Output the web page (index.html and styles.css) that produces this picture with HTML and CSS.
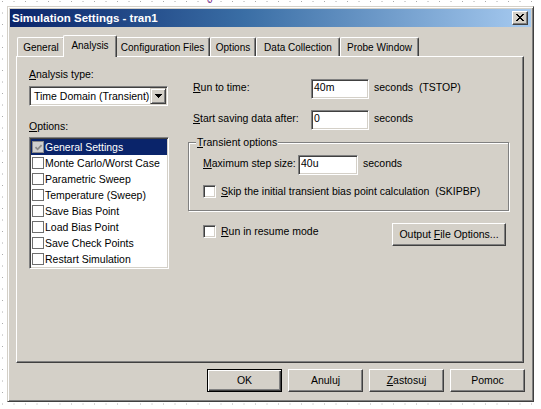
FILE: index.html
```html
<!DOCTYPE html>
<html>
<head>
<meta charset="utf-8">
<title>Simulation Settings - tran1</title>
<link rel="stylesheet" href="styles.css">
</head>
<body>
<span class="canvas-mark">0</span>
<div class="dialog">
  <div class="titlebar">
    <span class="title">Simulation Settings - tran1</span>
    <div class="close">
      <svg width="8" height="7" viewBox="0 0 8 7" shape-rendering="crispEdges"><path d="M0 0h2v1H0z M6 0h2v1H6z M1 1h2v1H1z M5 1h2v1H5z M2 2h4v1H2z M3 3h2v1H3z M2 4h4v1H2z M1 5h2v1H1z M5 5h2v1H5z M0 6h2v1H0z M6 6h2v1H6z" fill="#000"/></svg>
    </div>
  </div>
  <div class="dlg-body">
    <div class="tabs">
      <div class="tab t-general">General</div>
      <div class="tab tab-active t-analysis">Analysis</div>
      <div class="tab t-config">Configuration Files</div>
      <div class="tab t-options">Options</div>
      <div class="tab t-data">Data Collection</div>
      <div class="tab t-probe">Probe Window</div>
    </div>
    <div class="panel">
      <div class="col-left">
        <div class="lbl"><u>A</u>nalysis type:</div>
        <div class="combo">
          <span class="combo-text">Time Domain (Transient)</span>
          <span class="combo-btn"><svg width="7" height="4" viewBox="0 0 7 4" shape-rendering="crispEdges"><path d="M0 0h7v1H0z M1 1h5v1H1z M2 2h3v1H2z M3 3h1v1H3z" fill="#000"/></svg></span>
        </div>
        <div class="lbl lbl-options"><u>O</u>ptions:</div>
        <div class="listbox">
          <div class="li li-sel"><span class="lcb lcb-dis"><svg width="9" height="9" viewBox="0 0 9 9"><polyline points="1.5,4.2 3.6,6.3 7.6,2.2" fill="none" stroke="#8a8a8a" stroke-width="1.8"/></svg></span><span>General Settings</span></div>
          <div class="li"><span class="lcb"></span><span>Monte Carlo/Worst Case</span></div>
          <div class="li"><span class="lcb"></span><span>Parametric Sweep</span></div>
          <div class="li"><span class="lcb"></span><span>Temperature (Sweep)</span></div>
          <div class="li"><span class="lcb"></span><span>Save Bias Point</span></div>
          <div class="li"><span class="lcb"></span><span>Load Bias Point</span></div>
          <div class="li"><span class="lcb"></span><span>Save Check Points</span></div>
          <div class="li"><span class="lcb"></span><span>Restart Simulation</span></div>
        </div>
      </div>
      <div class="col-right">
        <div class="row">
          <span class="rlabel"><u>R</u>un to time:</span>
          <span class="field">40m</span>
          <span class="unit">seconds  (TSTOP)</span>
        </div>
        <div class="row row-2">
          <span class="rlabel"><u>S</u>tart saving data after:</span>
          <span class="field">0</span>
          <span class="unit">seconds</span>
        </div>
        <div class="group">
          <div class="legend"><u>T</u>ransient options</div>
          <div class="row row-max">
            <span class="rlabel rlabel-max"><u>M</u>aximum step size:</span>
            <span class="field field-max">40u</span>
            <span class="unit">seconds</span>
          </div>
          <div class="cbrow row-skip">
            <span class="cb"></span>
            <span class="cbtext"><u>S</u>kip the initial transient bias point calculation  (SKIPBP)</span>
          </div>
        </div>
        <div class="resume-row">
          <div class="cbrow row-resume">
            <span class="cb"></span>
            <span class="cbtext"><u>R</u>un in resume mode</span>
          </div>
          <div class="btn btn-output"><span class="btn-label">Output <u>F</u>ile Options...</span></div>
        </div>
      </div>
    </div>
    <div class="buttons">
      <div class="btn btn-default"><span class="btn-label">OK</span></div>
      <div class="btn"><span class="btn-label">Anuluj</span></div>
      <div class="btn"><span class="btn-label"><u>Z</u>astosuj</span></div>
      <div class="btn"><span class="btn-label">Pomoc</span></div>
    </div>
  </div>
</div>
</body>
</html>
```
FILE: styles.css
```css
* { box-sizing: border-box; }
html, body { margin: 0; padding: 0; }
body {
  width: 541px;
  height: 409px;
  overflow: hidden;
  position: relative;
  background-color: #fff;
  background-image:
    linear-gradient(90deg, #fff 10.5px, transparent 10.5px),
    linear-gradient(180deg, #fff 10.5px, #a8a8a8 10.5px);
  background-size: 11.5px 11.5px, 11.5px 11.5px;
  background-position: -8.5px -9.5px, -8.5px -9.5px;
  font-family: "Liberation Sans", Arial, sans-serif;
  font-size: 10.5px;
  color: #000;
}
u { text-decoration: underline; text-underline-offset: 1px; }

.canvas-mark {
  position: absolute;
  left: 207px;
  top: -5px;
  font-size: 10px;
  line-height: 10px;
  color: #7a1f8a;
}

.dialog {
  margin: 6px 0 0 7px;
  width: 527px;
  height: 396px;
  background: #d4d0c8;
  border: 1px solid;
  border-color: #d4d0c8 #404040 #404040 #d4d0c8;
  box-shadow: inset 1px 1px #fff, inset -1px -1px #808080;
  padding: 2px;
}

.titlebar {
  height: 18px;
  display: flex;
  align-items: center;
  justify-content: space-between;
  padding: 0 3px 0 2px;
  background: linear-gradient(90deg, #0a246a 0%, #3a6ea5 45%, #a6caf0 100%);
}
.title {
  color: #fff;
  font-weight: bold;
  font-size: 11.5px;
  line-height: 14px;
}
.close {
  width: 16px;
  height: 14px;
  background: #d4d0c8;
  border: 1px solid;
  border-color: #fff #404040 #404040 #fff;
  box-shadow: inset -1px -1px #808080;
  display: flex;
  align-items: center;
  justify-content: center;
  padding: 0 1px 1px 0;
}
.close svg { display: block; }

.dlg-body {
  padding: 8px 6px 0 6px;
}

.tabs {
  display: flex;
  align-items: flex-end;
  height: 21px;
  padding-left: 1px;
}
.tab {
  height: 19px;
  border-top: 1px solid #fff;
  border-left: 1px solid #fff;
  border-right: 1px solid #404040;
  box-shadow: inset -1px 0 #808080;
  border-radius: 2px 2px 0 0;
  padding-top: 4px;
  text-align: center;
  font-size: 10px;
  line-height: 12px;
  white-space: nowrap;
  background: #d4d0c8;
}
.tab-active {
  height: 22px;
  margin: 0 -2px -1px -2px;
  position: relative;
  z-index: 1;
}
.t-general { width: 48px; }
.t-analysis { width: 54px; }
.t-config { width: 95px; }
.t-options { width: 46px; }
.t-data { width: 84px; }
.t-probe { width: 79px; }

.panel {
  width: 508px;
  height: 307px;
  border: 1px solid;
  border-color: #fff #404040 #404040 #fff;
  box-shadow: inset -1px -1px #808080;
  padding: 11px 0 0 12px;
  display: grid;
  grid-template-columns: 140px 322px;
  column-gap: 19px;
  align-items: start;
}

.col-left { display: flex; flex-direction: column; }
.lbl { line-height: 13px; white-space: nowrap; }
.lbl-options { margin-top: 14px; }

.combo {
  margin-top: 5px;
  width: 139px;
  height: 20px;
  background: #fff;
  border: 1px solid;
  border-color: #808080 #fff #fff #808080;
  box-shadow: inset 1px 1px #404040, inset -1px -1px #d4d0c8;
  padding: 1px;
  display: flex;
  align-items: center;
  justify-content: space-between;
}
.combo-text { padding-left: 3px; line-height: 12px; white-space: nowrap; }
.combo-btn {
  width: 16px;
  height: 16px;
  background: #d4d0c8;
  border: 1px solid;
  border-color: #d4d0c8 #404040 #404040 #d4d0c8;
  box-shadow: inset 1px 1px #fff, inset -1px -1px #808080;
  display: flex;
  align-items: center;
  justify-content: center;
}
.combo-btn svg { display: block; }

.listbox {
  margin-top: 4px;
  width: 140px;
  height: 132px;
  background: #fff;
  border: 1px solid;
  border-color: #808080 #fff #fff #808080;
  box-shadow: inset 1px 1px #404040, inset -1px -1px #d4d0c8;
  padding: 1px;
}
.li {
  height: 16px;
  line-height: 16px;
  display: flex;
  align-items: center;
  gap: 1px;
  padding-left: 1px;
  white-space: nowrap;
}
.li-sel { background: #0a246a; color: #fff; }
.lcb {
  width: 12px;
  height: 12px;
  flex: none;
  border: 1px solid #6e6e6e;
  background: #fff;
  display: flex;
  align-items: center;
  justify-content: center;
}
.lcb-dis { background: #cfcfcf; border-color: #8a8a8a; }
.lcb svg { display: block; }

.col-right { padding-top: 11px; display: flex; flex-direction: column; }
.row {
  display: flex;
  align-items: baseline;
  padding-left: 5px;
}
.row-2 { margin-top: 11px; }
.rlabel { width: 118px; line-height: 13px; white-space: nowrap; flex: none; }
.rlabel-max { width: 95px; }
.field {
  width: 58px;
  height: 20px;
  flex: none;
  background: #fff;
  border: 1px solid;
  border-color: #808080 #fff #fff #808080;
  box-shadow: inset 1px 1px #404040, inset -1px -1px #d4d0c8;
  padding: 1px 2px;
  line-height: 12px;
}
.field-max { width: 60px; }
.unit { margin-left: 5px; white-space: pre; line-height: 13px; }

.group {
  margin-top: 12px;
  width: 321px;
  height: 69px;
  border: 1px solid #808080;
  box-shadow: inset 1px 1px #fff, 1px 1px 0 #fff;
  padding: 0 0 0 14px;
  display: flex;
  flex-direction: column;
  align-items: flex-start;
}
.legend {
  margin: -7px 0 0 -7px;
  padding: 0 1px;
  background: #d4d0c8;
  line-height: 12px;
  white-space: nowrap;
}
.row-max { margin-top: 7px; padding-left: 0; }

.cbrow { display: flex; align-items: center; gap: 5px; }
.row-skip { margin-top: 10px; }
.cb {
  width: 13px;
  height: 13px;
  flex: none;
  background: #fff;
  border: 1px solid;
  border-color: #808080 #fff #fff #808080;
  box-shadow: inset 1px 1px #404040, inset -1px -1px #d4d0c8;
}
.cbtext { line-height: 13px; white-space: pre; }

.resume-row {
  margin-top: 12px;
  display: flex;
  justify-content: space-between;
  align-items: flex-start;
  padding: 0 4px 0 15px;
}
.row-resume { margin-top: 2px; }

.btn {
  width: 75px;
  height: 23px;
  background: #d4d0c8;
  border: 1px solid;
  border-color: #fff #404040 #404040 #fff;
  box-shadow: inset -1px -1px #808080;
  display: flex;
  align-items: center;
  justify-content: center;
  line-height: 13px;
}
.btn-label { white-space: pre; }
.btn-output { width: 114px; }
.btn-default {
  border-color: #000;
  box-shadow: inset 1px 1px #fff, inset -1px -1px #404040, inset -2px -2px #808080;
}

.buttons {
  margin-top: 6px;
  display: flex;
  justify-content: flex-end;
  gap: 6px;
}
```
